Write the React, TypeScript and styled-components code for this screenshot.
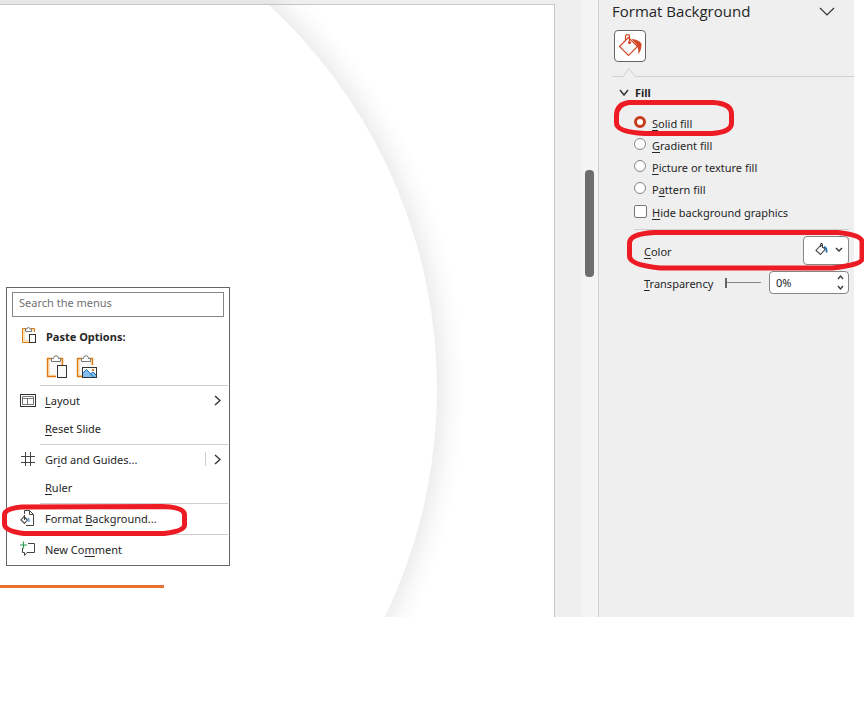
import React from "react";
import styled, { createGlobalStyle } from "styled-components";

const GlobalStyle = createGlobalStyle`
  *, *::before, *::after { box-sizing: border-box; }
  body {
    margin: 0;
    background: #ffffff;
    color: #262626;
    font-family: "Noto Sans", "Open Sans", sans-serif;
    font-size: 11px;
  }
  button, input { font: inherit; color: inherit; }
  u { text-underline-offset: 2px; text-decoration-thickness: 1px; }
`;

const Page = styled.main`
  position: relative;
  display: flex;
  padding-right: 10px;
  overflow: hidden;
`;

const Canvas = styled.section`
  position: relative;
  flex: 1;
  min-width: 0;
  padding: 4px 26px 0 0;
  background: linear-gradient(90deg, #e6e6e6 0, #e6e6e6 268px, #efefef 290px);
`;

const Slide = styled.svg`
  display: block;
  width: 100%;
  height: auto;
  background: #ffffff;
  border-top: 1px solid #c6c6c6;
  border-right: 1px solid #c6c6c6;
`;

const ScrollTrack = styled.div`
  flex: 0 0 17px;
  padding: 170px 4px 0;
  background: #f4f4f4;
`;

const ScrollThumb = styled.div`
  height: 107px;
  border-radius: 4px;
  background: #6e6e6e;
`;

const Menu = styled.div`
  position: absolute;
  left: 6px;
  top: 287px;
  width: 224px;
  padding: 4px 0 1px;
  background: #ffffff;
  border: 1px solid #666666;
`;

const SearchBox = styled.input`
  display: block;
  width: 212px;
  height: 25px;
  margin: 0 5px 5px;
  padding: 0 6px 4px;
  border: 1px solid #868686;
  background: #ffffff;
  outline: none;
  &::placeholder { color: #707070; opacity: 1; }
`;

const MenuHeading = styled.div`
  display: flex;
  align-items: center;
  gap: 10px;
  height: 28px;
  padding-left: 13px;
  font-weight: 700;
`;

const PasteRow = styled.div`
  display: flex;
  align-items: center;
  gap: 6px;
  height: 34px;
  padding-left: 38px;
`;

const PasteButton = styled.button`
  display: flex;
  width: 24px;
  height: 26px;
  padding: 0;
  border: 0;
  background: none;
`;

const Divider = styled.hr`
  height: 1px;
  margin: 1px 1px 1px 33px;
  border: 0;
  background: #cfcfcf;
`;

const MenuItem = styled.button`
  display: flex;
  align-items: center;
  gap: 9px;
  width: 100%;
  height: 28px;
  padding: 0 8px 2px 13px;
  border: 0;
  background: none;
  text-align: left;
`;

const IconSlot = styled.span`
  display: flex;
  align-items: center;
  flex: 0 0 16px;
  height: 16px;
`;

const ItemLabel = styled.span`
  flex: 1;
`;

const SubmenuMark = styled.span<{ $split?: boolean }>`
  display: flex;
  align-items: center;
  height: 14px;
  padding-left: 8px;
  border-left: 1px solid ${(p) => (p.$split ? "#cfcfcf" : "transparent")};
`;

const Panel = styled.aside`
  flex: 0 0 256px;
  padding-left: 13px;
  background: #efefef;
  border-left: 1px solid #d0d0d0;
`;

const PanelHeader = styled.header`
  display: flex;
  align-items: center;
  justify-content: space-between;
  height: 24px;
  padding: 0 19px 2px 0;
`;

const PanelTitle = styled.h2`
  margin: 0;
  font-family: "Open Sans", "Noto Sans", sans-serif;
  font-size: 15px;
  font-weight: 400;
  line-height: 22px;
`;

const PlainButton = styled.button`
  display: flex;
  align-items: center;
  justify-content: center;
  padding: 0;
  border: 0;
  background: none;
`;

const TabRow = styled.div`
  padding: 6px 0 5px 2px;
`;

const TabButton = styled.button`
  display: flex;
  align-items: center;
  justify-content: center;
  width: 32px;
  height: 32px;
  padding: 0;
  border: 1px solid #666666;
  border-radius: 4px;
  background: #ffffff;
`;

const TabRule = styled.div`
  display: flex;
  align-items: flex-end;
  height: 10px;
  &::after {
    content: "";
    flex: 1;
    height: 1px;
    background: #d0d0d0;
  }
`;

const SectionToggle = styled.button`
  display: flex;
  align-items: center;
  gap: 6px;
  height: 22px;
  margin: 4px 0 10px;
  padding: 0 0 0 7px;
  border: 0;
  background: none;
  font-weight: 700;
`;

const Options = styled.fieldset`
  min-width: 0;
  margin: 0 5px 0 22px;
  padding: 0 0 5px;
  border: 0;
  border-bottom: 1px solid #d0d0d0;
`;

const Option = styled.label`
  display: flex;
  align-items: flex-start;
  gap: 6px;
  height: 22px;
  line-height: 22px;
`;

const Radio = styled.input`
  appearance: none;
  width: 12px;
  height: 12px;
  margin: 3px 0 0;
  border: 1px solid #868686;
  border-radius: 50%;
  background: #ffffff;
  &:checked { border: 3px solid #c43e1c; }
`;

const CheckOption = styled(Option)`
  gap: 5px;
  margin-top: 1px;
`;

const CheckBox = styled.input`
  appearance: none;
  width: 13px;
  height: 13px;
  margin: 3px 0 0;
  border: 1px solid #767676;
  border-radius: 2px;
  background: #ffffff;
`;

const Field = styled.div<{ $height: number }>`
  display: flex;
  align-items: center;
  height: ${(p) => p.$height}px;
  padding: 0 5px 0 32px;
`;

const FieldLabel = styled.label`
  flex: 1;
  padding-top: 2px;
`;

const ColorButton = styled.button`
  display: flex;
  align-items: center;
  justify-content: space-between;
  width: 46px;
  height: 29px;
  padding: 0 5px 2px 11px;
  border: 1px solid #868686;
  border-radius: 4px;
  background: #ffffff;
`;

const Slider = styled.input`
  appearance: none;
  width: 36px;
  height: 10px;
  margin: 0 8px 0 0;
  background: linear-gradient(#868686, #868686) center / 100% 1px no-repeat;
  &::-webkit-slider-thumb {
    appearance: none;
    width: 2px;
    height: 10px;
    background: #666666;
  }
`;

const Spinner = styled.div`
  display: flex;
  width: 80px;
  height: 23px;
  border: 1px solid #868686;
  border-radius: 4px;
  background: #ffffff;
`;

const SpinnerInput = styled.input`
  flex: 1;
  min-width: 0;
  padding: 0 0 1px 6px;
  border: 0;
  background: none;
  outline: none;
`;

const SpinnerButtons = styled.div`
  display: flex;
  flex-direction: column;
  justify-content: space-between;
  width: 16px;
  padding: 3px 0;
`;

const Markup = styled.svg`
  position: absolute;
  left: 0;
  top: 0;
  pointer-events: none;
`;

const PanelMarkup = styled(Markup)`
  left: auto;
  right: 0;
`;

type ChevronProps = { dir: "down" | "up" | "right"; w: number; h: number; stroke?: number };

const Chevron = ({ dir, w, h, stroke = 1.2 }: ChevronProps) => {
  const d = {
    down: `M1 1L${w / 2} ${h - 1}L${w - 1} 1`,
    up: `M1 ${h - 1}L${w / 2} 1L${w - 1} ${h - 1}`,
    right: `M1 1L${w - 1} ${h / 2}L1 ${h - 1}`,
  }[dir];
  return (
    <svg width={w} height={h} fill="none" stroke="#333" strokeWidth={stroke} aria-hidden>
      <path d={d} />
    </svg>
  );
};

const ClipboardIcon = () => (
  <svg width="16" height="18" viewBox="-1 1 16 18" fill="none" aria-hidden>
    <path d="M5 4H3V15H8M10.5 4H12.5V6" stroke="#fbe3b8" strokeWidth="2" />
    <path d="M5 2.500H1.500V16.500H8M10 2.500H13.500V6" stroke="#dd7a12" />
    <path d="M4.500 5.500V3H6Q6 1.500 7.500 1.500T9 3H10.500V5.500Z" fill="#fff" stroke="#777" />
    <rect x="8.500" y="8.500" width="6" height="8" fill="#fff" stroke="#333" />
  </svg>
);

const PasteIcon = ({ picture }: { picture?: boolean }) => (
  <svg width="24" height="26" viewBox="0 0 24 26" fill="none" aria-hidden>
    <path d="M3 5H17V23H3Z" fill="#fafafa" />
    <path d="M7 6H4V21.5H11M13 6H16V11" stroke="#fbe3b8" strokeWidth="1.6" />
    <path d="M7 4.5H2.5V22.5H11M13 4.5H17.5V11" stroke="#dd7a12" strokeWidth="1.4" />
    <path d="M6.5 7.5V4.5H8.5Q8.5 1.7 11 1.7T13.500 4.500H15.500V7.500Z" fill="#fff" stroke="#777" />
    {picture ? (
      <>
        <rect x="7.500" y="13.500" width="14" height="10" fill="#fff" stroke="#333" />
        <path d="M8 19L11.500 15.500L16 20L18 18L21 21V23H8Z" fill="#83beec" />
        <path d="M8 19L11.500 15.500L18.500 23M15.500 20L18 18L21 21" stroke="#1e6fb8" />
        <rect x="17" y="15" width="2" height="2" fill="#e8822e" />
      </>
    ) : (
      <rect x="12.500" y="11.500" width="9" height="12" fill="#fafafa" stroke="#333" />
    )}
  </svg>
);

const LayoutIcon = () => (
  <svg width="16" height="16" viewBox="0 0 16 16" fill="none" aria-hidden>
    <rect x=".5" y="2.500" width="15" height="12" stroke="#333" />
    <path d="M2.500 4.500H13.500V12.500H2.500ZM2.500 6.500H13.500M7.500 6.500V12.500" stroke="#777" />
  </svg>
);

const GridIcon = () => (
  <svg width="16" height="16" viewBox="0 0 16 16" fill="none" stroke="#444" aria-hidden>
    <path d="M1 5.500H15M1 11.500H15M5.500 1V15M10.500 1V15" />
  </svg>
);

const FormatIcon = () => (
  <svg width="16" height="16" viewBox="0 0 16 16" fill="none" aria-hidden>
    <path d="M4.500 4V.5H9.500L13.500 4.500V15.500H6M9.500 .5V4.500H13.500" stroke="#444" />
    <path d="M4 6.500L7.500 10L4.500 13.500L1 10ZM4.500 10V5" stroke="#444" strokeWidth="1.100" />
    <path d="M8 8Q9.500 9 9 12" stroke="#4f9ee0" strokeWidth="1.400" />
  </svg>
);

const CommentIcon = () => (
  <svg width="16" height="16" viewBox="0 0 16 16" fill="none" aria-hidden>
    <path d="M8 2.500H14.500V11.500H7L4.500 14.500V11.500H2.500V7" stroke="#444" />
    <path d="M0 4H7M3.500 .5V7.500" stroke="#2f9a50" strokeWidth="1.200" />
  </svg>
);

const FillIcon = () => (
  <svg width="24" height="24" viewBox="0 0 24 24" fill="none" aria-hidden>
    <path d="M10.500 3.500L1.500 12.500L10.500 21.500L19.500 12.500Z" stroke="#d24726" strokeWidth="1.200" />
    <path d="M7.500 6V2.500Q7.500 .7 9.500 .7T11.500 2.500V8" stroke="#d24726" strokeWidth="1.200" />
    <circle cx="11.500" cy="8.500" r="1.600" fill="#d24726" />
    <path d="M13.500 5Q21 5.500 23.300 9.500Q24.300 14 20.500 20.500Q20.500 13.500 18.500 10.500Z" fill="#d24726" />
  </svg>
);

const BucketIcon = () => (
  <svg width="14" height="14" viewBox="0 1 14 14" fill="none" aria-hidden>
    <path d="M6 3L10 7.500L5.500 12.500L1 8.500ZM5.500 5V3Q5.500 1.500 6.500 1.500T7.500 3V6" stroke="#444" strokeWidth="1.100" />
    <path d="M9 5Q12 5.500 11.500 10.500" stroke="#1f6fb5" strokeWidth="1.800" />
  </svg>
);

const fillOptions = [
  { id: "solid", before: "", key: "S", after: "olid fill" },
  { id: "gradient", before: "", key: "G", after: "radient fill" },
  { id: "picture", before: "", key: "P", after: "icture or texture fill" },
  { id: "pattern", before: "P", key: "a", after: "ttern fill" },
];

const SlideArt = () => (
  <Slide viewBox="0 0 554 612" role="img" aria-label="Slide">
    <defs>
      <radialGradient id="edge" gradientUnits="userSpaceOnUse" cx="-86" cy="384" r="551">
        <stop offset="0.948" stopColor="#eeeeee" />
        <stop offset="0.962" stopColor="#f4f4f4" />
        <stop offset="0.98" stopColor="#fbfbfb" />
        <stop offset="1" stopColor="#ffffff" />
      </radialGradient>
    </defs>
    <circle cx="-86" cy="384" r="551" fill="url(#edge)" />
    <circle cx="-86" cy="384" r="523" fill="#ffffff" />
    <rect x="0" y="580" width="164" height="3" fill="#e97132" />
  </Slide>
);

const ContextMenu = () => (
  <Menu>
    <SearchBox type="text" placeholder="Search the menus" aria-label="Search the menus" />
    <MenuHeading>
      <IconSlot><ClipboardIcon /></IconSlot>
      Paste Options:
    </MenuHeading>
    <PasteRow>
      <PasteButton type="button" aria-label="Paste"><PasteIcon /></PasteButton>
      <PasteButton type="button" aria-label="Paste as picture"><PasteIcon picture /></PasteButton>
    </PasteRow>
    <Divider />
    <MenuItem type="button">
      <IconSlot><LayoutIcon /></IconSlot>
      <ItemLabel><u>L</u>ayout</ItemLabel>
      <SubmenuMark><Chevron dir="right" w={7} h={11} stroke={1.4} /></SubmenuMark>
    </MenuItem>
    <MenuItem type="button">
      <IconSlot />
      <ItemLabel><u>R</u>eset Slide</ItemLabel>
    </MenuItem>
    <Divider />
    <MenuItem type="button">
      <IconSlot><GridIcon /></IconSlot>
      <ItemLabel>Gr<u>i</u>d and Guides...</ItemLabel>
      <SubmenuMark $split><Chevron dir="right" w={7} h={11} stroke={1.4} /></SubmenuMark>
    </MenuItem>
    <MenuItem type="button">
      <IconSlot />
      <ItemLabel><u>R</u>uler</ItemLabel>
    </MenuItem>
    <Divider />
    <MenuItem type="button">
      <IconSlot><FormatIcon /></IconSlot>
      <ItemLabel>Format <u>B</u>ackground...</ItemLabel>
    </MenuItem>
    <Divider />
    <MenuItem type="button">
      <IconSlot><CommentIcon /></IconSlot>
      <ItemLabel>New Co<u>m</u>ment</ItemLabel>
    </MenuItem>
  </Menu>
);

const FormatPanel = () => (
  <Panel>
    <PanelHeader>
      <PanelTitle>Format Background</PanelTitle>
      <PlainButton type="button" aria-label="Pane options"><Chevron dir="down" w={16} h={9} /></PlainButton>
    </PanelHeader>
    <TabRow>
      <TabButton type="button" aria-label="Fill"><FillIcon /></TabButton>
    </TabRow>
    <TabRule>
      <svg width="24" height="10" fill="none" stroke="#d0d0d0" aria-hidden>
        <path d="M0 9.500H11L17 1.500L23 9.500H24" />
      </svg>
    </TabRule>
    <SectionToggle type="button">
      <Chevron dir="down" w={10} h={7} stroke={1.5} />
      Fill
    </SectionToggle>
    <Options aria-label="Fill type">
      {fillOptions.map((o) => (
        <Option key={o.id}>
          <Radio type="radio" name="fill" value={o.id} defaultChecked={o.id === "solid"} />
          <span>{o.before}<u>{o.key}</u>{o.after}</span>
        </Option>
      ))}
      <CheckOption>
        <CheckBox type="checkbox" />
        <span><u>H</u>ide background graphics</span>
      </CheckOption>
    </Options>
    <Field $height={41}>
      <FieldLabel htmlFor="color"><u>C</u>olor</FieldLabel>
      <ColorButton id="color" type="button">
        <BucketIcon />
        <Chevron dir="down" w={8} h={5} stroke={1.4} />
      </ColorButton>
    </Field>
    <Field $height={23}>
      <FieldLabel htmlFor="transparency"><u>T</u>ransparency</FieldLabel>
      <Slider type="range" min={0} max={100} defaultValue={0} aria-label="Transparency slider" />
      <Spinner>
        <SpinnerInput id="transparency" type="text" defaultValue="0%" />
        <SpinnerButtons>
          <PlainButton type="button" aria-label="Increase"><Chevron dir="up" w={7} h={5} /></PlainButton>
          <PlainButton type="button" aria-label="Decrease"><Chevron dir="down" w={7} h={5} /></PlainButton>
        </SpinnerButtons>
      </Spinner>
    </Field>
  </Panel>
);

const App = () => (
  <>
    <GlobalStyle />
    <Page>
      <Canvas>
        <SlideArt />
        <ContextMenu />
      </Canvas>
      <ScrollTrack><ScrollThumb /></ScrollTrack>
      <FormatPanel />
      <Markup width="200" height="560" fill="none" stroke="#ed1c24" strokeWidth="5" strokeLinejoin="round" aria-hidden>
        <path d="M22 507L162 506.500Q184.500 507 184.500 515V525Q184.500 531 164 533.500H24Q4.500 531 4.500 524V515Q4.500 508.500 22 507Z" />
      </Markup>
      <PanelMarkup width="264" height="300" fill="none" stroke="#ed1c24" strokeWidth="5" strokeLinejoin="round" aria-hidden>
        <path d="M29 102.500H113Q131.500 103.500 131.500 114V123Q131.500 132 112 133.500H45Q16.500 132 16.500 123V116Q16.500 104 29 102.500Z" />
        <path d="M54 232.500H238Q262 235 262 242V259Q262 265 232 268H60Q29.500 265 29.500 256V243Q29.500 234 54 232.500Z" />
      </PanelMarkup>
    </Page>
  </>
);

export default App;
